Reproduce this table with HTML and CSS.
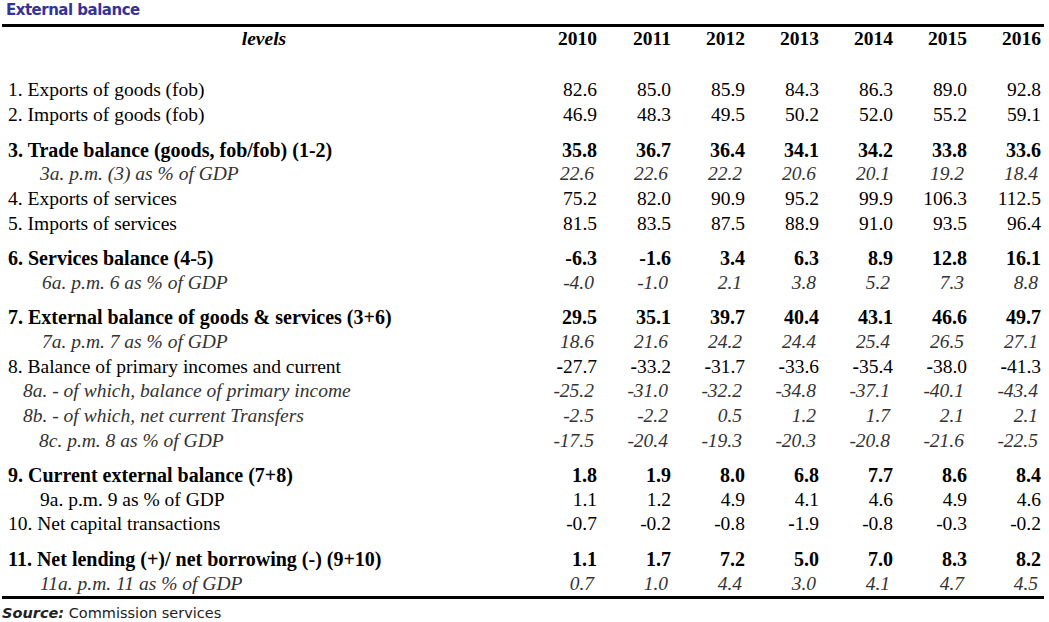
FILE: index.html
```html
<!DOCTYPE html>
<html>
<head>
<meta charset="utf-8">
<link rel="stylesheet" href="styles.css">
</head>
<body>
<div class="title">External balance</div>
<table class="tbl">
  <colgroup>
    <col class="c-label"><col class="c-num"><col class="c-num"><col class="c-num"><col class="c-num"><col class="c-num"><col class="c-num"><col class="c-num">
  </colgroup>
  <thead>
    <tr class="hdr"><th class="lvl">levels</th><th>2010</th><th>2011</th><th>2012</th><th>2013</th><th>2014</th><th>2015</th><th>2016</th></tr>
  </thead>
  <tbody>
    <tr class="blank"><td colspan="8"></td></tr>
    <tr><td class="lab">1. Exports of goods (fob)</td><td>82.6</td><td>85.0</td><td>85.9</td><td>84.3</td><td>86.3</td><td>89.0</td><td>92.8</td></tr>
    <tr><td class="lab">2. Imports of goods (fob)</td><td>46.9</td><td>48.3</td><td>49.5</td><td>50.2</td><td>52.0</td><td>55.2</td><td>59.1</td></tr>
    <tr class="sp"><td colspan="8"></td></tr>
    <tr class="b"><td class="lab">3. Trade balance (goods, fob/fob) (1-2)</td><td>35.8</td><td>36.7</td><td>36.4</td><td>34.1</td><td>34.2</td><td>33.8</td><td>33.6</td></tr>
    <tr class="i"><td class="lab in3">3a. p.m. (3) as % of GDP</td><td>22.6</td><td>22.6</td><td>22.2</td><td>20.6</td><td>20.1</td><td>19.2</td><td>18.4</td></tr>
    <tr><td class="lab">4. Exports of services</td><td>75.2</td><td>82.0</td><td>90.9</td><td>95.2</td><td>99.9</td><td>106.3</td><td>112.5</td></tr>
    <tr><td class="lab">5. Imports of services</td><td>81.5</td><td>83.5</td><td>87.5</td><td>88.9</td><td>91.0</td><td>93.5</td><td>96.4</td></tr>
    <tr class="sp"><td colspan="8"></td></tr>
    <tr class="b"><td class="lab">6. Services balance (4-5)</td><td>-6.3</td><td>-1.6</td><td>3.4</td><td>6.3</td><td>8.9</td><td>12.8</td><td>16.1</td></tr>
    <tr class="i"><td class="lab in4">6a. p.m. 6 as % of GDP</td><td>-4.0</td><td>-1.0</td><td>2.1</td><td>3.8</td><td>5.2</td><td>7.3</td><td>8.8</td></tr>
    <tr class="sp"><td colspan="8"></td></tr>
    <tr class="b"><td class="lab">7. External balance of goods &amp; services (3+6)</td><td>29.5</td><td>35.1</td><td>39.7</td><td>40.4</td><td>43.1</td><td>46.6</td><td>49.7</td></tr>
    <tr class="i"><td class="lab in4">7a. p.m. 7 as % of GDP</td><td>18.6</td><td>21.6</td><td>24.2</td><td>24.4</td><td>25.4</td><td>26.5</td><td>27.1</td></tr>
    <tr><td class="lab">8. Balance of primary incomes and current</td><td><b class="neg">-</b>27.7</td><td><b class="neg">-</b>33.2</td><td><b class="neg">-</b>31.7</td><td><b class="neg">-</b>33.6</td><td><b class="neg">-</b>35.4</td><td><b class="neg">-</b>38.0</td><td><b class="neg">-</b>41.3</td></tr>
    <tr class="i"><td class="lab in1">8a. - of which, balance of primary income</td><td>-25.2</td><td>-31.0</td><td>-32.2</td><td>-34.8</td><td>-37.1</td><td>-40.1</td><td>-43.4</td></tr>
    <tr class="i"><td class="lab in1">8b. - of which, net current Transfers</td><td>-2.5</td><td>-2.2</td><td>0.5</td><td>1.2</td><td>1.7</td><td>2.1</td><td>2.1</td></tr>
    <tr class="i"><td class="lab in2">8c. p.m. 8 as % of GDP</td><td>-17.5</td><td>-20.4</td><td>-19.3</td><td>-20.3</td><td>-20.8</td><td>-21.6</td><td>-22.5</td></tr>
    <tr class="sp"><td colspan="8"></td></tr>
    <tr class="b"><td class="lab">9. Current external balance (7+8)</td><td>1.8</td><td>1.9</td><td>8.0</td><td>6.8</td><td>7.7</td><td>8.6</td><td>8.4</td></tr>
    <tr><td class="lab in3">9a. p.m. 9 as % of GDP</td><td>1.1</td><td>1.2</td><td>4.9</td><td>4.1</td><td>4.6</td><td>4.9</td><td>4.6</td></tr>
    <tr><td class="lab">10. Net capital transactions</td><td>-0.7</td><td>-0.2</td><td>-0.8</td><td><b class="neg">-</b>1.9</td><td>-0.8</td><td>-0.3</td><td>-0.2</td></tr>
    <tr class="sp"><td colspan="8"></td></tr>
    <tr class="b"><td class="lab">11. Net lending (+)/ net borrowing (-) (9+10)</td><td>1.1</td><td>1.7</td><td>7.2</td><td>5.0</td><td>7.0</td><td>8.3</td><td>8.2</td></tr>
    <tr class="i last"><td class="lab in3">11a. p.m. 11 as % of GDP</td><td>0.7</td><td>1.0</td><td>4.4</td><td>3.0</td><td>4.1</td><td>4.7</td><td>4.5</td></tr>
  </tbody>
</table>
<div class="source"><span class="src-label">Source:</span> Commission services</div>
</body>
</html>
```

FILE: styles.css
```css
html, body {
  margin: 0;
  padding: 0;
  background: #ffffff;
}

body {
  width: 1049px;
  height: 622px;
  overflow: hidden;
}

.title {
  height: 24px;
  padding-left: 6px;
  font-family: "DejaVu Sans", sans-serif;
  font-weight: bold;
  font-size: 15px;
  letter-spacing: -0.5px;
  line-height: 21px;
  color: #333399;
}

.tbl {
  margin-left: 2px;
  width: 1042px;
  border-collapse: collapse;
  table-layout: fixed;
  font-family: "Liberation Serif", "Times New Roman", serif;
  font-size: 19.5px;
  color: #000;
  border-top: 3px solid #000;
  border-bottom: 3px solid #000;
}

.c-label { width: 524px; }
.c-num { width: 74px; }

.tbl th,
.tbl td {
  padding: 0 3px 0 0;
  height: 24.7px;
  line-height: 24.7px;
  text-align: right;
  white-space: nowrap;
  vertical-align: middle;
}

.tbl th {
  font-weight: bold;
  height: 25.7px;
}

.tbl th.lvl {
  text-align: center;
  font-style: italic;
  padding-right: 0;
}

.tbl td.lab {
  text-align: left;
  padding-left: 6px;
}

.tbl tr.blank td { height: 25.8px; }

.tbl tr.sp td {
  height: 9.7px;
  line-height: 9.7px;
}

.tbl tr.b td {
  font-weight: bold;
  font-size: 20px;
}

.tbl tr.i td {
  font-style: italic;
  color: #333333;
  padding-right: 6px;
}

.tbl td.lab.in1 { padding-left: 21px; }
.tbl td.lab.in2 { padding-left: 37px; }
.tbl td.lab.in3 { padding-left: 38px; }
.tbl td.lab.in4 { padding-left: 40px; }

.neg { font-weight: bold; }

.source {
  padding-left: 2px;
  font-family: "DejaVu Sans", sans-serif;
  font-size: 14.5px;
  line-height: 28px;
  color: #222;
}

.src-label {
  font-weight: bold;
  font-style: italic;
}
```
